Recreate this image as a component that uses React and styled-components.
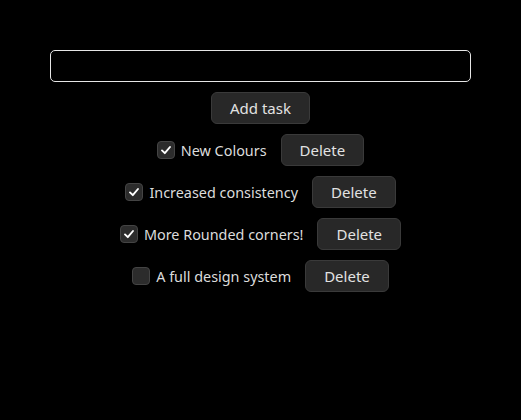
import { useState } from "react"
import styled, { createGlobalStyle } from "styled-components"

const GlobalStyle = createGlobalStyle`
  html, body {
    margin: 0;
    background: #000;
    color: #dedede;
    font-family: "Noto Sans", "Open Sans", sans-serif;
  }
`

const initialTasks = [
  { id: 1, text: "New Colours", done: true },
  { id: 2, text: "Increased consistency", done: true },
  { id: 3, text: "More Rounded corners!", done: true },
  { id: 4, text: "A full design system", done: false },
]

const App = () => {
  const [tasks, setTasks] = useState(initialTasks)
  const [draft, setDraft] = useState("")

  const addTask = () => {
    if (!draft.trim()) return
    setTasks([...tasks, { id: Date.now(), text: draft, done: false }])
    setDraft("")
  }

  const toggle = (id) => {
    setTasks(tasks.map((t) => (t.id === id ? { ...t, done: !t.done } : t)))
  }

  const remove = (id) => {
    setTasks(tasks.filter((t) => t.id !== id))
  }

  return (
    <>
      <GlobalStyle />
      <Page>
        <TaskInput autoFocus value={draft} onChange={(e) => setDraft(e.target.value)} />
        <Button onClick={addTask}>Add task</Button>
        {tasks.map((task) => (
          <Row key={task.id}>
            <TaskLabel>
              <HiddenCheck type="checkbox" checked={task.done} onChange={() => toggle(task.id)} />
              <Box>
                {task.done && (
                  <svg width="12" height="12" viewBox="0 0 12 12">
                    <path d="M2 6.4 L4.8 9.2 L10 3" fill="none" stroke="#fff" strokeWidth="1.9" strokeLinecap="round" strokeLinejoin="round" />
                  </svg>
                )}
              </Box>
              {task.text}
            </TaskLabel>
            <Button onClick={() => remove(task.id)}>Delete</Button>
          </Row>
        ))}
      </Page>
    </>
  )
}

export default App

const Page = styled.main`
  display: flex;
  flex-direction: column;
  align-items: center;
  gap: 10px;
  padding: 50px 50px 0;
`

const TaskInput = styled.input`
  box-sizing: border-box;
  width: 100%;
  height: 32px;
  background: #000;
  border: 1px solid #e6e6e6;
  border-radius: 5px;
  color: #eee;
  font: inherit;
  font-size: 15px;
  padding: 0 12px;
  outline: none;
  caret-color: #eee;
`

const Button = styled.button`
  box-sizing: border-box;
  height: 32px;
  padding: 0 18px;
  background: #282828;
  border: 1px solid #3a3a3a;
  border-radius: 6px;
  color: #e2e2e2;
  font-family: "Noto Sans", "Open Sans", sans-serif;
  font-size: 15px;
  cursor: pointer;
`

const Row = styled.div`
  display: flex;
  align-items: center;
  gap: 14px;
`

const TaskLabel = styled.label`
  display: flex;
  align-items: center;
  gap: 6px;
  font-size: 14.4px;
  color: #dcdcdc;
  cursor: pointer;
`

const HiddenCheck = styled.input`
  display: none;
`

const Box = styled.span`
  box-sizing: border-box;
  width: 18px;
  height: 18px;
  display: flex;
  align-items: center;
  justify-content: center;
  background: #2c2c2c;
  border: 1px solid #444;
  border-radius: 4px;
`
